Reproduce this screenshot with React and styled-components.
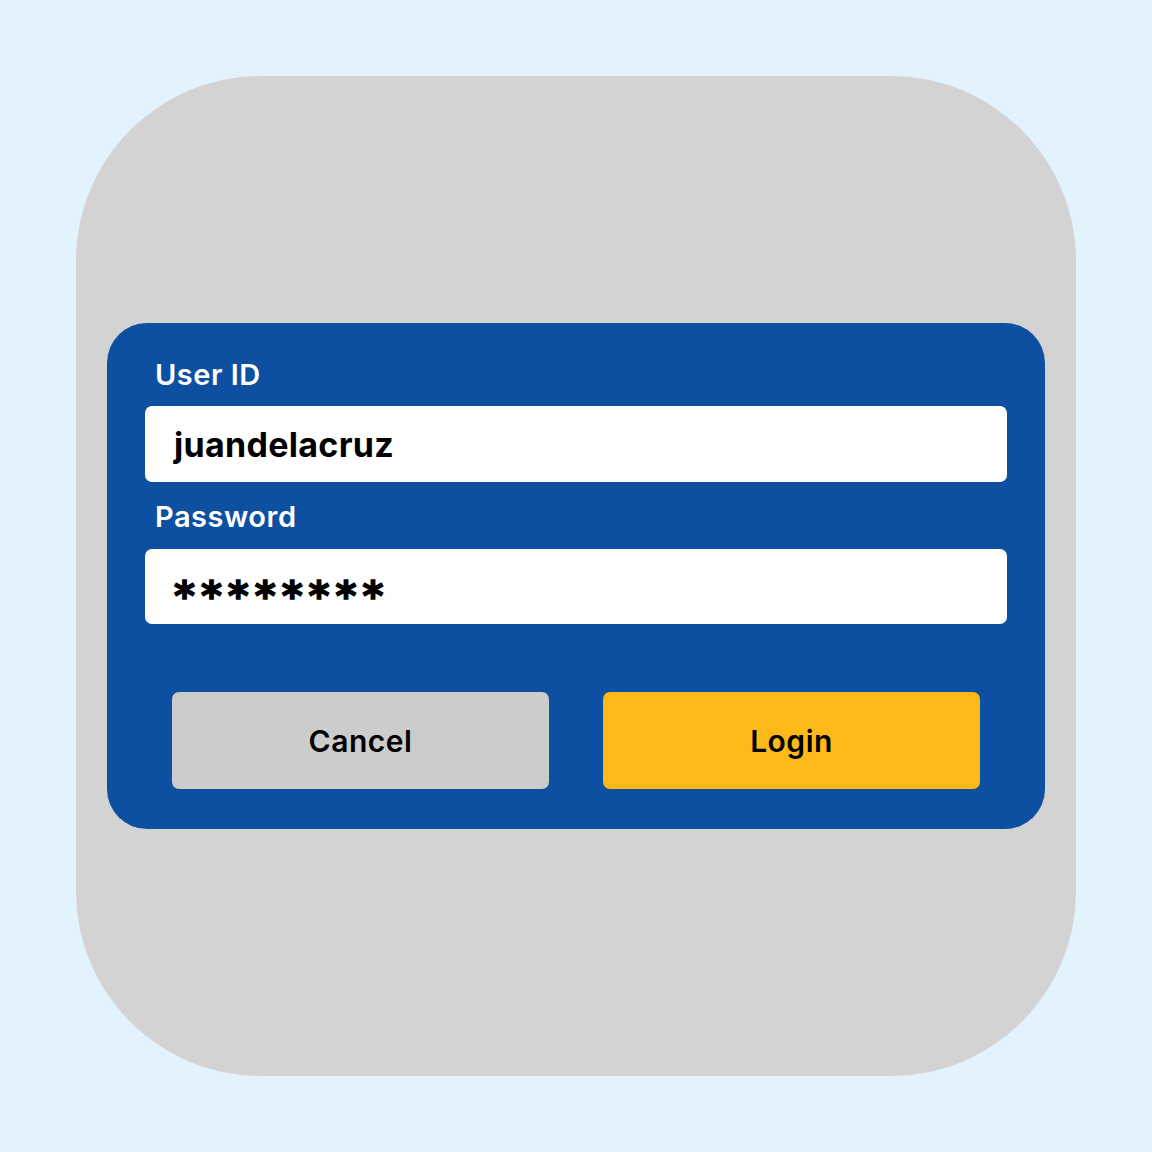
import styled, { createGlobalStyle } from "styled-components";

const GlobalStyle = createGlobalStyle`
  html, body {
    margin: 0;
    padding: 0;
    background: #e3f3fe;
  }
  body {
    font-family: Inter, "Open Sans", "Noto Sans", sans-serif;
  }
`;

function App() {
  return (
    <>
      <GlobalStyle />
      <Page>
        <Tile>
          <LoginPanel>
            <Label>User ID</Label>
            <Field>juandelacruz</Field>
            <Label>Password</Label>
            <Field>
              <Mask>********</Mask>
            </Field>
            <ButtonRow>
              <ActionButton>Cancel</ActionButton>
              <ActionButton primary>Login</ActionButton>
            </ButtonRow>
          </LoginPanel>
        </Tile>
      </Page>
    </>
  );
}

export default App;

const Page = styled.div`
  width: 1152px;
  height: 1152px;
  display: flex;
  align-items: center;
  justify-content: center;
`;

const Tile = styled.div`
  width: 1000px;
  height: 1000px;
  box-sizing: border-box;
  padding: 0 31px;
  background: #d3d3d3;
  border-radius: 185px;
  display: flex;
  align-items: center;
`;

const LoginPanel = styled.div`
  flex: 1;
  height: 506px;
  box-sizing: border-box;
  padding: 30px 38px 40px;
  background: #0d4fa0;
  border-radius: 40px;
  display: flex;
  flex-direction: column;
`;

const Label = styled.div`
  color: #ffffff;
  font-size: 29px;
  font-weight: 600;
  letter-spacing: 0.5px;
  line-height: 40px;
  padding-left: 10px;
  padding-top: 2px;
  margin-bottom: 11px;

  & + div + & {
    margin-top: 13px;
    margin-bottom: 12px;
  }
`;

const Field = styled.div`
  height: 76px;
  box-sizing: border-box;
  padding: 2px 29px 0;
  background: #ffffff;
  border-radius: 7px;
  display: flex;
  align-items: center;
  color: #000000;
  font-size: 34px;
  font-weight: 700;
  letter-spacing: 0.3px;
`;

const Mask = styled.span`
  font-family: "DejaVu Sans", sans-serif;
  font-size: 40px;
  font-weight: 700;
  letter-spacing: 6px;
  line-height: 1;
  padding-top: 18px;
  -webkit-text-stroke: 1.5px #000000;
`;

const ButtonRow = styled.div`
  margin-top: 68px;
  padding: 0 27px;
  display: grid;
  grid-template-columns: 1fr 1fr;
  gap: 54px;
`;

const ActionButton = styled.button`
  height: 97px;
  border: none;
  border-radius: 7px;
  background: ${(props) => (props.primary ? "#fdb918" : "#cccccc")};
  color: #000000;
  font-family: inherit;
  font-size: 30px;
  font-weight: 600;
  letter-spacing: 0.5px;
  cursor: pointer;
`;
